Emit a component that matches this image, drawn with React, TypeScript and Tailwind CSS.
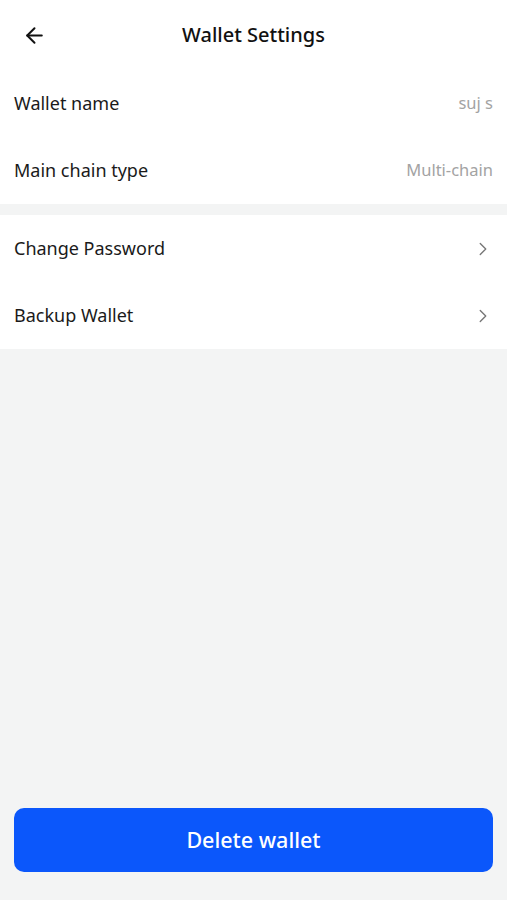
import { ArrowLeft, ChevronRight } from "lucide-react";

const font = { fontFamily: '"Noto Sans", "Open Sans", sans-serif' };

const InfoRow = ({ label, value }: { label: string; value: string }) => (
  <div className="flex items-center justify-between h-[67px] px-[14px]">
    <span className="text-[18px] text-[#1a1a1a]">{label}</span>
    <span className="text-[16.5px] text-[#a3a3a3]">{value}</span>
  </div>
);

const LinkRow = ({ label }: { label: string }) => (
  <div className="flex items-center justify-between h-[67px] pl-[14px] pr-[13px]">
    <span className="text-[18px] text-[#1a1a1a]">{label}</span>
    <ChevronRight className="w-[22px] h-[22px] text-[#777]" strokeWidth={1.5} />
  </div>
);

export default function App() {
  return (
    <div className="h-[900px] flex flex-col bg-[#f3f4f4]" style={font}>
      <div className="bg-white">
        <div className="relative flex items-center justify-center h-[70px]">
          <ArrowLeft className="absolute left-[22px] top-[23px] w-[25px] h-[25px] text-[#111]" strokeWidth={1.9} />
          <span className="text-[20px] font-medium text-[#111]">Wallet Settings</span>
        </div>
        <InfoRow label="Wallet name" value="suj s" />
        <InfoRow label="Main chain type" value="Multi-chain" />
      </div>

      <div className="h-[11px]" />

      <div className="bg-white">
        <LinkRow label="Change Password" />
        <LinkRow label="Backup Wallet" />
      </div>

      <div className="flex-1" />

      <div className="px-[14px] pb-[28px]">
        <button className="w-full h-[64px] rounded-[10px] bg-[#0b57fb] text-white text-[21.5px] font-medium">
          Delete wallet
        </button>
      </div>
    </div>
  );
}
